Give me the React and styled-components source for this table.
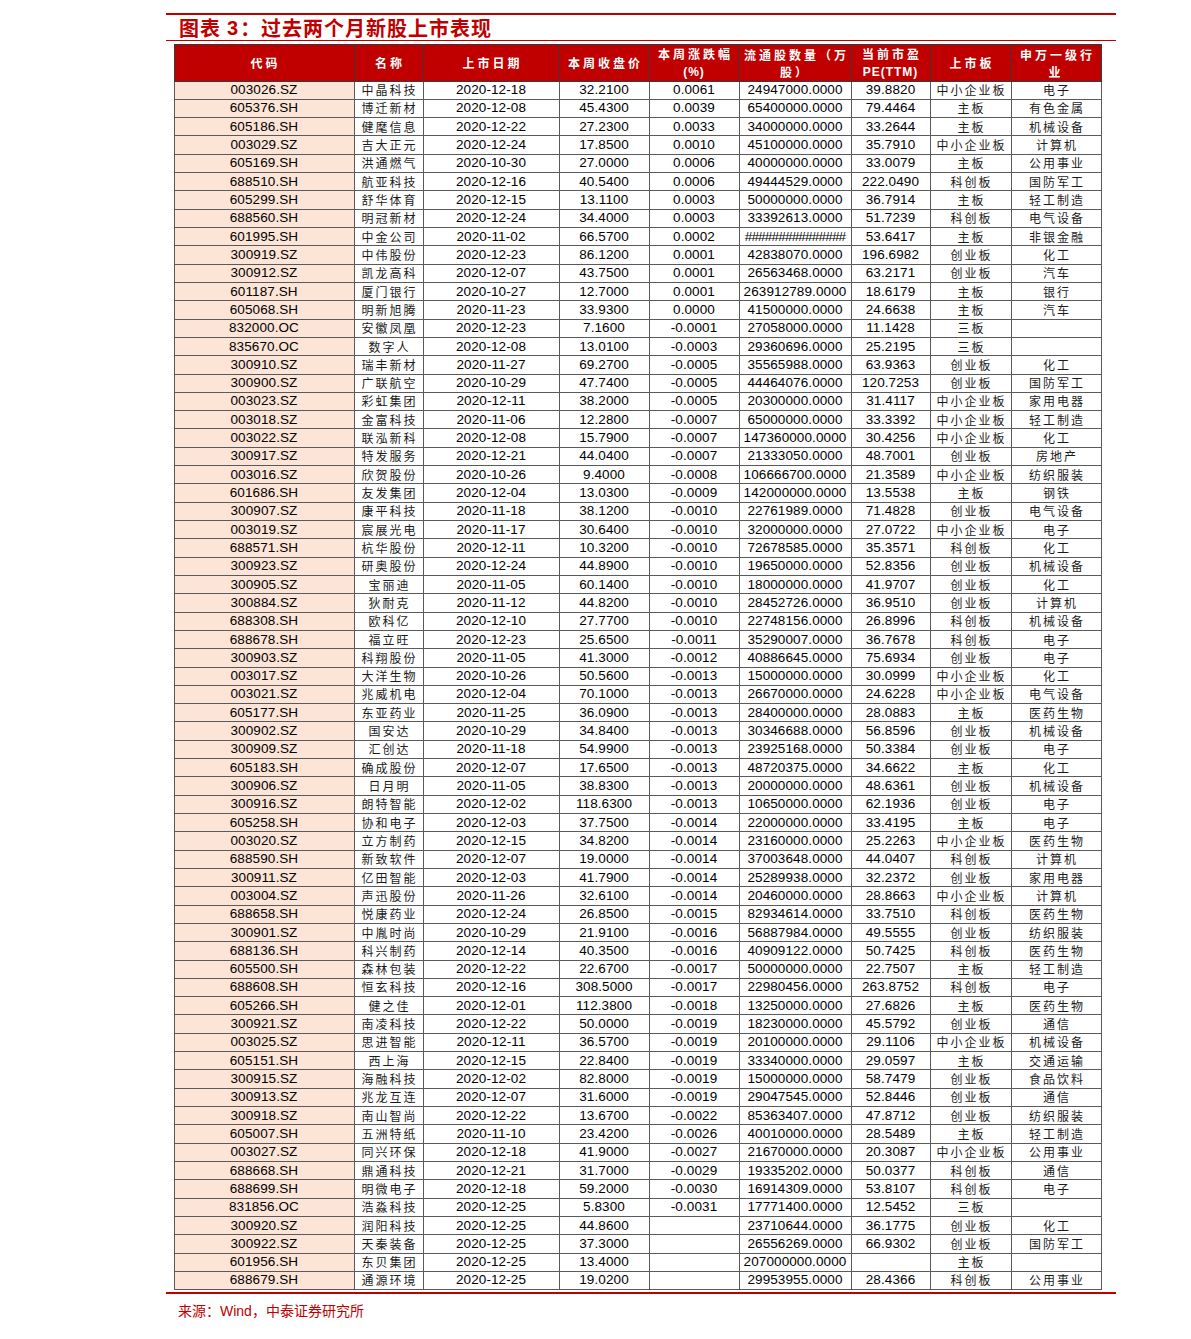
import React from 'react';
import styled, { createGlobalStyle } from 'styled-components';

const RED = '#c00000';

const GlobalStyle = createGlobalStyle`
  body {
    margin: 0;
    background: #fff;
    font-family: "Liberation Sans", "Noto Sans CJK SC", sans-serif;
  }
`;

const Page = styled.div`
  width: 950px;
  padding: 13px 0 40px 166px;
`;

const TopRule = styled.div`
  height: 2px;
  background: ${RED};
`;

const Title = styled.h1`
  margin: 0;
  height: 25px;
  display: flex;
  align-items: center;
  padding-left: 13px;
  border-bottom: 1.5px solid ${RED};
  color: ${RED};
  font-family: "Noto Sans CJK SC", sans-serif;
  font-size: 20px;
  font-weight: 700;
  letter-spacing: 1px;
  line-height: 1;
`;

const TitleNum = styled.span`
  font-family: "Liberation Sans", sans-serif;
  font-weight: 700;
  margin: 0 1px 0 6px;
`;

const Table = styled.table`
  margin: 2.5px 0 0 7.5px;
  width: 927px;
  table-layout: fixed;
  border-collapse: collapse;
  color: #000;
`;

const HeadCell = styled.th`
  height: 31.5px;
  padding: 0;
  background: ${RED};
  color: #fff;
  border: 1px solid #3a3a3a;
  font-family: "Noto Sans CJK SC", sans-serif;
  font-size: 12px;
  font-weight: 700;
  letter-spacing: 3px;
  line-height: 17px;
  text-align: center;
  vertical-align: middle;
  text-indent: 3px;
`;

const Latin = styled.span`
  font-family: "Liberation Sans", sans-serif;
  letter-spacing: 1px;
`;

const Row = styled.tr`
  height: 18.32px;
`;

const Cell = styled.td`
  padding: 0;
  border: 1px solid #5a5a5a;
  background: ${(p) => (p.$code ? '#fce4d6' : '#fff')};
  text-align: center;
  vertical-align: middle;
  white-space: nowrap;
  overflow: hidden;
  line-height: 16px;
  font-family: ${(p) => (p.$cjk ? '"Noto Sans CJK SC", sans-serif' : '"Liberation Sans", sans-serif')};
  font-size: ${(p) => (p.$cjk ? '12px' : '13.5px')};
  letter-spacing: ${(p) => (p.$cjk ? '2px' : '0.1px')};
  text-indent: ${(p) => (p.$cjk ? '2px' : '0')};
  color: ${(p) => (p.$cjk ? '#1a1a1a' : '#000')};
`;

const Hashes = styled.span`
  letter-spacing: -0.8px;
`;

const BottomRule = styled.div`
  margin-top: 1.5px;
  height: 2px;
  background: ${RED};
`;

const Source = styled.p`
  margin: 9px 0 0;
  padding-left: 12px;
  color: ${RED};
  font-family: "Liberation Sans", "Noto Sans CJK SC", sans-serif;
  font-size: 14px;
  line-height: 16px;
`;

const widths = [180, 69, 136, 90, 90, 112, 79, 81, 90];

const rows = [
  ['003026.SZ', '中晶科技', '2020-12-18', '32.2100', '0.0061', '24947000.0000', '39.8820', '中小企业板', '电子'],
  ['605376.SH', '博迁新材', '2020-12-08', '45.4300', '0.0039', '65400000.0000', '79.4464', '主板', '有色金属'],
  ['605186.SH', '健麾信息', '2020-12-22', '27.2300', '0.0033', '34000000.0000', '33.2644', '主板', '机械设备'],
  ['003029.SZ', '吉大正元', '2020-12-24', '17.8500', '0.0010', '45100000.0000', '35.7910', '中小企业板', '计算机'],
  ['605169.SH', '洪通燃气', '2020-10-30', '27.0000', '0.0006', '40000000.0000', '33.0079', '主板', '公用事业'],
  ['688510.SH', '航亚科技', '2020-12-16', '40.5400', '0.0006', '49444529.0000', '222.0490', '科创板', '国防军工'],
  ['605299.SH', '舒华体育', '2020-12-15', '13.1100', '0.0003', '50000000.0000', '36.7914', '主板', '轻工制造'],
  ['688560.SH', '明冠新材', '2020-12-24', '34.4000', '0.0003', '33392613.0000', '51.7239', '科创板', '电气设备'],
  ['601995.SH', '中金公司', '2020-11-02', '66.5700', '0.0002', '###############', '53.6417', '主板', '非银金融'],
  ['300919.SZ', '中伟股份', '2020-12-23', '86.1200', '0.0001', '42838070.0000', '196.6982', '创业板', '化工'],
  ['300912.SZ', '凯龙高科', '2020-12-07', '43.7500', '0.0001', '26563468.0000', '63.2171', '创业板', '汽车'],
  ['601187.SH', '厦门银行', '2020-10-27', '12.7000', '0.0001', '263912789.0000', '18.6179', '主板', '银行'],
  ['605068.SH', '明新旭腾', '2020-11-23', '33.9300', '0.0000', '41500000.0000', '24.6638', '主板', '汽车'],
  ['832000.OC', '安徽凤凰', '2020-12-23', '7.1600', '-0.0001', '27058000.0000', '11.1428', '三板', ''],
  ['835670.OC', '数字人', '2020-12-08', '13.0100', '-0.0003', '29360696.0000', '25.2195', '三板', ''],
  ['300910.SZ', '瑞丰新材', '2020-11-27', '69.2700', '-0.0005', '35565988.0000', '63.9363', '创业板', '化工'],
  ['300900.SZ', '广联航空', '2020-10-29', '47.7400', '-0.0005', '44464076.0000', '120.7253', '创业板', '国防军工'],
  ['003023.SZ', '彩虹集团', '2020-12-11', '38.2000', '-0.0005', '20300000.0000', '31.4117', '中小企业板', '家用电器'],
  ['003018.SZ', '金富科技', '2020-11-06', '12.2800', '-0.0007', '65000000.0000', '33.3392', '中小企业板', '轻工制造'],
  ['003022.SZ', '联泓新科', '2020-12-08', '15.7900', '-0.0007', '147360000.0000', '30.4256', '中小企业板', '化工'],
  ['300917.SZ', '特发服务', '2020-12-21', '44.0400', '-0.0007', '21333050.0000', '48.7001', '创业板', '房地产'],
  ['003016.SZ', '欣贺股份', '2020-10-26', '9.4000', '-0.0008', '106666700.0000', '21.3589', '中小企业板', '纺织服装'],
  ['601686.SH', '友发集团', '2020-12-04', '13.0300', '-0.0009', '142000000.0000', '13.5538', '主板', '钢铁'],
  ['300907.SZ', '康平科技', '2020-11-18', '38.1200', '-0.0010', '22761989.0000', '71.4828', '创业板', '电气设备'],
  ['003019.SZ', '宸展光电', '2020-11-17', '30.6400', '-0.0010', '32000000.0000', '27.0722', '中小企业板', '电子'],
  ['688571.SH', '杭华股份', '2020-12-11', '10.3200', '-0.0010', '72678585.0000', '35.3571', '科创板', '化工'],
  ['300923.SZ', '研奥股份', '2020-12-24', '44.8900', '-0.0010', '19650000.0000', '52.8356', '创业板', '机械设备'],
  ['300905.SZ', '宝丽迪', '2020-11-05', '60.1400', '-0.0010', '18000000.0000', '41.9707', '创业板', '化工'],
  ['300884.SZ', '狄耐克', '2020-11-12', '44.8200', '-0.0010', '28452726.0000', '36.9510', '创业板', '计算机'],
  ['688308.SH', '欧科亿', '2020-12-10', '27.7700', '-0.0010', '22748156.0000', '26.8996', '科创板', '机械设备'],
  ['688678.SH', '福立旺', '2020-12-23', '25.6500', '-0.0011', '35290007.0000', '36.7678', '科创板', '电子'],
  ['300903.SZ', '科翔股份', '2020-11-05', '41.3000', '-0.0012', '40886645.0000', '75.6934', '创业板', '电子'],
  ['003017.SZ', '大洋生物', '2020-10-26', '50.5600', '-0.0013', '15000000.0000', '30.0999', '中小企业板', '化工'],
  ['003021.SZ', '兆威机电', '2020-12-04', '70.1000', '-0.0013', '26670000.0000', '24.6228', '中小企业板', '电气设备'],
  ['605177.SH', '东亚药业', '2020-11-25', '36.0900', '-0.0013', '28400000.0000', '28.0883', '主板', '医药生物'],
  ['300902.SZ', '国安达', '2020-10-29', '34.8400', '-0.0013', '30346688.0000', '56.8596', '创业板', '机械设备'],
  ['300909.SZ', '汇创达', '2020-11-18', '54.9900', '-0.0013', '23925168.0000', '50.3384', '创业板', '电子'],
  ['605183.SH', '确成股份', '2020-12-07', '17.6500', '-0.0013', '48720375.0000', '34.6622', '主板', '化工'],
  ['300906.SZ', '日月明', '2020-11-05', '38.8300', '-0.0013', '20000000.0000', '48.6361', '创业板', '机械设备'],
  ['300916.SZ', '朗特智能', '2020-12-02', '118.6300', '-0.0013', '10650000.0000', '62.1936', '创业板', '电子'],
  ['605258.SH', '协和电子', '2020-12-03', '37.7500', '-0.0014', '22000000.0000', '33.4195', '主板', '电子'],
  ['003020.SZ', '立方制药', '2020-12-15', '34.8200', '-0.0014', '23160000.0000', '25.2263', '中小企业板', '医药生物'],
  ['688590.SH', '新致软件', '2020-12-07', '19.0000', '-0.0014', '37003648.0000', '44.0407', '科创板', '计算机'],
  ['300911.SZ', '亿田智能', '2020-12-03', '41.7900', '-0.0014', '25289938.0000', '32.2372', '创业板', '家用电器'],
  ['003004.SZ', '声迅股份', '2020-11-26', '32.6100', '-0.0014', '20460000.0000', '28.8663', '中小企业板', '计算机'],
  ['688658.SH', '悦康药业', '2020-12-24', '26.8500', '-0.0015', '82934614.0000', '33.7510', '科创板', '医药生物'],
  ['300901.SZ', '中胤时尚', '2020-10-29', '21.9100', '-0.0016', '56887984.0000', '49.5555', '创业板', '纺织服装'],
  ['688136.SH', '科兴制药', '2020-12-14', '40.3500', '-0.0016', '40909122.0000', '50.7425', '科创板', '医药生物'],
  ['605500.SH', '森林包装', '2020-12-22', '22.6700', '-0.0017', '50000000.0000', '22.7507', '主板', '轻工制造'],
  ['688608.SH', '恒玄科技', '2020-12-16', '308.5000', '-0.0017', '22980456.0000', '263.8752', '科创板', '电子'],
  ['605266.SH', '健之佳', '2020-12-01', '112.3800', '-0.0018', '13250000.0000', '27.6826', '主板', '医药生物'],
  ['300921.SZ', '南凌科技', '2020-12-22', '50.0000', '-0.0019', '18230000.0000', '45.5792', '创业板', '通信'],
  ['003025.SZ', '思进智能', '2020-12-11', '36.5700', '-0.0019', '20100000.0000', '29.1106', '中小企业板', '机械设备'],
  ['605151.SH', '西上海', '2020-12-15', '22.8400', '-0.0019', '33340000.0000', '29.0597', '主板', '交通运输'],
  ['300915.SZ', '海融科技', '2020-12-02', '82.8000', '-0.0019', '15000000.0000', '58.7479', '创业板', '食品饮料'],
  ['300913.SZ', '兆龙互连', '2020-12-07', '31.6000', '-0.0019', '29047545.0000', '52.8446', '创业板', '通信'],
  ['300918.SZ', '南山智尚', '2020-12-22', '13.6700', '-0.0022', '85363407.0000', '47.8712', '创业板', '纺织服装'],
  ['605007.SH', '五洲特纸', '2020-11-10', '23.4200', '-0.0026', '40010000.0000', '28.5489', '主板', '轻工制造'],
  ['003027.SZ', '同兴环保', '2020-12-18', '41.9000', '-0.0027', '21670000.0000', '20.3087', '中小企业板', '公用事业'],
  ['688668.SH', '鼎通科技', '2020-12-21', '31.7000', '-0.0029', '19335202.0000', '50.0377', '科创板', '通信'],
  ['688699.SH', '明微电子', '2020-12-18', '59.2000', '-0.0030', '16914309.0000', '53.8107', '科创板', '电子'],
  ['831856.OC', '浩淼科技', '2020-12-25', '5.8300', '-0.0031', '17771400.0000', '12.5452', '三板', ''],
  ['300920.SZ', '润阳科技', '2020-12-25', '44.8600', '', '23710644.0000', '36.1775', '创业板', '化工'],
  ['300922.SZ', '天秦装备', '2020-12-25', '37.3000', '', '26556269.0000', '66.9302', '创业板', '国防军工'],
  ['601956.SH', '东贝集团', '2020-12-25', '13.4000', '', '207000000.0000', '', '主板', ''],
  ['688679.SH', '通源环境', '2020-12-25', '19.0200', '', '29953955.0000', '28.4366', '科创板', '公用事业'],
];

const cjkCols = [1, 7, 8];

export default function App() {
  return (
    <Page>
      <GlobalStyle />
      <TopRule />
      <Title>
        图表<TitleNum>3</TitleNum>：过去两个月新股上市表现
      </Title>
      <Table>
        <colgroup>
          {widths.map((w, i) => (
            <col key={i} style={{ width: w }} />
          ))}
        </colgroup>
        <thead>
          <tr>
            <HeadCell>代码</HeadCell>
            <HeadCell>名称</HeadCell>
            <HeadCell>上市日期</HeadCell>
            <HeadCell>本周收盘价</HeadCell>
            <HeadCell>
              本周涨跌幅
              <br />
              <Latin>(%)</Latin>
            </HeadCell>
            <HeadCell>
              流通股数量（万
              <br />
              股）
            </HeadCell>
            <HeadCell>
              当前市盈
              <br />
              <Latin>PE(TTM)</Latin>
            </HeadCell>
            <HeadCell>上市板</HeadCell>
            <HeadCell>
              申万一级行
              <br />
              业
            </HeadCell>
          </tr>
        </thead>
        <tbody>
          {rows.map((r) => (
            <Row key={r[0]}>
              {r.map((v, i) => (
                <Cell key={i} $code={i === 0} $cjk={cjkCols.includes(i)}>
                  {v.startsWith('#') ? <Hashes>{v}</Hashes> : v}
                </Cell>
              ))}
            </Row>
          ))}
        </tbody>
      </Table>
      <BottomRule />
      <Source>来源：Wind，中泰证券研究所</Source>
    </Page>
  );
}
